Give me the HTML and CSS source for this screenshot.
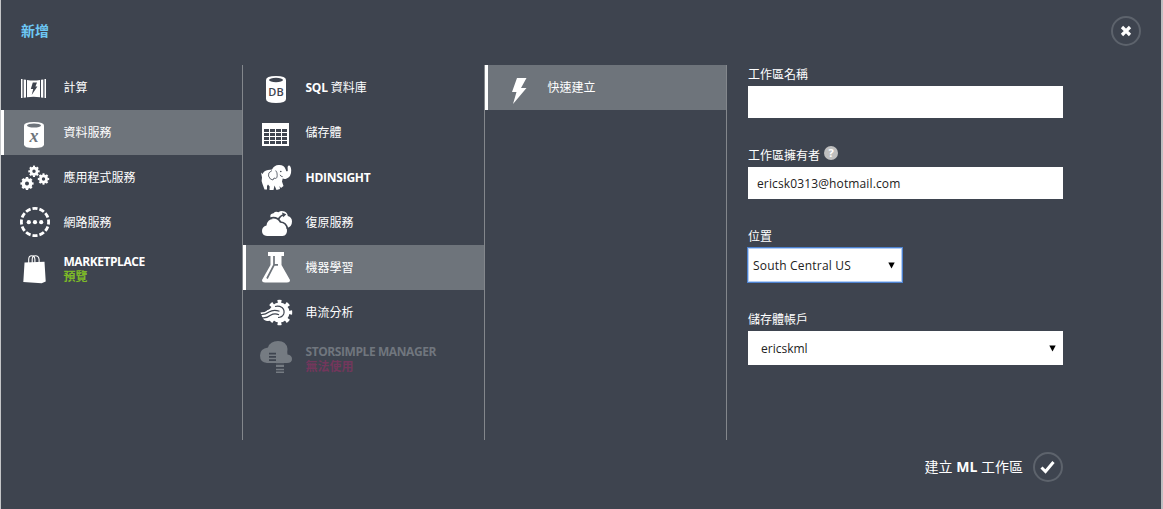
FILE: index.html
```html
<!DOCTYPE html>
<html lang="zh-Hant">
<head>
<meta charset="utf-8">
<title>新增</title>
<link rel="stylesheet" href="styles.css">
</head>
<body>
<div class="drawer">
  <header class="head">
    <h1 class="title">新增</h1>
    <button class="round" aria-label="關閉"><svg width="30" height="30" viewBox="0 0 30 30"><circle class="ring" cx="15" cy="15" r="14"/><path class="cross" d="M11 11l8 8M19 11l-8 8"/></svg></button>
  </header>
  <main class="body">
    <nav class="col">
      <div class="item">
        <svg class="icon" viewBox="0 0 36 45"><path d="M4 14h1.500v19H4zM6.700 14.500l2.300.3v17.600l-2.300.3zM27.500 14H29v19h-1.500zM24 14.800l2.300-.3v18.200l-2.300-.3zM10 15q6.500 1 13 0v17.300q-6.500-1-13 0z"/><path class="cut" d="M15.800 17.500h4.200l-1.600 4h2l-5.700 8.500 1.500-6h-2.400z"/></svg>
        <span class="label">計算</span>
      </div>
      <div class="item on">
        <svg class="icon" viewBox="0 0 36 45"><path d="M7 15.500q0-3.500 10-3.500t10 3.500v19q0 3.500-10 3.500t-10-3.500z"/><ellipse class="cut" cx="17" cy="15.500" rx="7" ry="2"/><text class="script" x="17" y="32">x</text></svg>
        <span class="label">資料服務</span>
      </div>
      <div class="item">
        <svg class="icon" viewBox="0 0 36 45"><g class="gear"><circle cx="17" cy="16.300" r="3.100"/><circle class="teeth" cx="17" cy="16.300" r="4.800" pathLength="16"/><circle cx="26.500" cy="24" r="3.100"/><circle class="teeth" cx="26.500" cy="24" r="4.800" pathLength="16"/><circle class="big" cx="10" cy="28.500" r="3.700"/><circle class="teeth" cx="10" cy="28.500" r="5.700" pathLength="16"/></g></svg>
        <span class="label">應用程式服務</span>
      </div>
      <div class="item">
        <svg class="icon" viewBox="0 0 36 45"><circle class="dashes" cx="18" cy="22" r="13.600" pathLength="96"/><circle cx="11.800" cy="22.200" r="2.100"/><circle cx="18" cy="22.200" r="2.100"/><circle cx="24.200" cy="22.200" r="2.100"/></svg>
        <span class="label">網路服務</span>
      </div>
      <div class="item">
        <svg class="icon" viewBox="0 0 36 45"><path d="M7.500 17.500l20-.8 1.200 19.700-4 1.900L6.300 37z"/><path class="line" d="M11.700 18v-3.500q0-3.700 3-3.700t3.200 3.700V18M15.200 18v-3.500q0-3.700 3.200-3.700t3.700 3.700V18"/></svg>
        <span class="label two"><b class="market">MARKETPLACE</b><small class="sub preview">預覽</small></span>
      </div>
    </nav>
    <nav class="col">
      <div class="item">
        <svg class="icon" viewBox="0 0 36 45"><path d="M7 15q0-4 10-4t10 4v19q0 4-10 4t-10-4z"/><ellipse class="cut" cx="17" cy="15" rx="7" ry="2.200"/><text class="db" x="17" y="31">DB</text></svg>
        <span class="label"><b>SQL</b> 資料庫</span>
      </div>
      <div class="item">
        <svg class="icon" viewBox="0 0 36 45"><path fill-rule="evenodd" d="M3 13h27v23H3zM5 19h5v3H5zm6 0h5v3h-5zm6 0h5v3h-5zm6 0h5v3h-5zM5 23h5v3H5zm6 0h5v3h-5zm6 0h5v3h-5zm6 0h5v3h-5zM5 27h5v3H5zm6 0h5v3h-5zm6 0h5v3h-5zm6 0h5v3h-5zM5 31h5v3H5zm6 0h5v3h-5zm6 0h5v3h-5zm6 0h5v3h-5z"/></svg>
        <span class="label">儲存體</span>
      </div>
      <div class="item">
        <svg class="icon" viewBox="0 0 36 45"><path d="M2 17.500l1.500 1.500Q5 15.500 9 15l4-.5Q15.500 9.500 20.500 10q4.500.2 6 4 .8 2.500 1.500 2.500 1.200-.3.700-2.500-.5-3.500 1.300-3.500t2.200 4.500q.3 7-5 8.700-2 .5-3.500-.2l-.7 3 1.500 4.500-2.500 2-1.500-2 .5 3-3.500 1-2-4.500-1 4.500h-4l.2-3.500-1.700-2-1 1.500v3.500H5.500l-2-5.500q-1.500-3-.5-6.500z"/><path class="cutline thin" d="M13 15.500q-4.500 2-3.500 5.500 1.500 4 4.500 4l1-2q3 1.500 3.200-2.300.3-3.200-1.500-5.200M23.700 21.700q-2.200-.2-2.700-1.900"/><circle class="cut" cx="21.800" cy="16.500" r=".8"/></svg>
        <span class="label"><b>HDINSIGHT</b></span>
      </div>
      <div class="item">
        <svg class="icon" viewBox="0 0 36 45"><path d="M11.500 17.500q-1-3.800 3-4.200 2-2.300 5-1 2.500-2.300 6-.8 3 1 3.300 4.500 4.200 1 4.200 5.500 0 5.500-5.500 6.500z"/><path d="M8 36q-5-.5-5-5t4.500-5.500q1-6.500 6.500-6.500t6.500 4q6.500-.5 7.500 6 .5 6.500-4.500 7z"/><path class="cutline thick" d="M11.500 18q7-1.500 10 4 6 .5 7 7M19.500 19q2-3.500 5-4"/><path class="cut" d="M23 12.500l4.300 1.800-3 3z"/></svg>
        <span class="label">復原服務</span>
      </div>
      <div class="item on">
        <svg class="icon" viewBox="0 0 36 45"><path d="M9 7h16v4h-2.500v9L31 35q0 2.500-3 2.500H6Q3 37.500 3 35l8.500-15v-9H9z"/><path class="cutline thick" d="M15 11v9L8 33.500M15 19.800h4"/></svg>
        <span class="label">機器學習</span>
      </div>
      <div class="item">
        <svg class="icon" viewBox="0 0 36 45"><circle cx="20.500" cy="22.500" r="10"/><circle class="bigteeth" cx="20.500" cy="22.500" r="11" pathLength="16"/><path class="cut" d="M0 9h8.500l2.500 9-5 4H0zM0 30h9l5 6H0z"/><path d="M1.500 22.500q4.500 0 7.500-2.500t7-2.500l5 1.500v8l-5 1.200q-4 3.500-8 2.800-3.500-.5-5-4.500z"/><path class="cutline" d="M1.500 24.500q5 .3 8.500-2.500 4.500-3 10.500-.7M3 27.800q5 .5 8.500-2.500 4-2.500 8.500-.5M16 16.500q4-1 7 1 3 2.700 1.700 6.500-1.700 3.500-5.700 3.500"/></svg>
        <span class="label">串流分析</span>
      </div>
      <div class="item off">
        <svg class="icon" viewBox="0 0 36 45"><path d="M8 28q-7-.5-7-7.500t8-8Q11 6 19 6q8.500 0 9.500 8-.5 3.500 0 5.500 4.500.5 4.500 4.500t-5 4h-3v10h-8V28z"/><path class="cut" d="M10 17.700h7v1.800h-7zM10 21h7v1.800h-7zM10 24.300h7V26h-7zM16 28.300h9v1.500h-9zM16 32h9v1.800h-9zM16 35.200h9v1.300h-9z"/></svg>
        <span class="label two"><b class="store">STORSIMPLE MANAGER</b><small class="sub unavailable">無法使用</small></span>
      </div>
    </nav>
    <nav class="col">
      <div class="item on">
        <svg class="icon" viewBox="0 0 36 45"><path d="M16 13h9.500L20 23h5.500L12 39l3.500-12h-4.500z"/></svg>
        <span class="label">快速建立</span>
      </div>
    </nav>
    <form class="form">
      <div class="field"><label class="caption">工作區名稱</label><div class="box"></div></div>
      <div class="field"><label class="caption">工作區擁有者<svg class="help" width="14" height="14" viewBox="0 0 14 14"><circle cx="7" cy="7" r="7"/><text x="7" y="11.200">?</text></svg></label><div class="box"><span class="mail">ericsk0313@hotmail.com</span></div></div>
      <div class="field"><label class="caption">位置</label><div class="box select focus"><span class="place">South Central US</span><svg width="7" height="7" viewBox="0 0 7 7"><path d="M.3 .5h6.400l-3.200 6z"/></svg></div></div>
      <div class="field"><label class="caption">儲存體帳戶</label><div class="box select wide"><span class="account">ericskml</span><svg width="7" height="7" viewBox="0 0 7 7"><path d="M.3 .5h6.400l-3.200 6z"/></svg></div></div>
    </form>
  </main>
  <footer class="foot">
    <span class="create">建立 <b>ML</b> 工作區</span>
    <button class="round" aria-label="建立"><svg width="30" height="30" viewBox="0 0 30 30"><circle class="ring" cx="15" cy="15" r="14"/><path class="check" d="M8.500 15.500l4 4L20.500 10"/></svg></button>
  </footer>
</div>
</body>
</html>
```
FILE: styles.css
```css
* { box-sizing: border-box; }
body {
  margin: 0;
  background: #3e444f;
  color: #fff;
  font: 12px/15px "Open Sans", "Noto Sans CJK TC", sans-serif;
}
.drawer {
  height: 509px;
  border-left: 1px solid #c4c6c8;
  border-right: 2px solid #bfc0c2;
  overflow: hidden;
}
.head {
  display: flex;
  justify-content: space-between;
  height: 65px;
  padding: 16px 20px 0;
}
.title {
  margin: 5px 0 0;
  color: #6dc8f5;
  font-size: 14px;
  line-height: 20px;
  font-weight: 700;
}
.round {
  width: 30px;
  height: 30px;
  padding: 0;
  border: 0;
  background: none;
}
.round svg { display: block; }
.ring { fill: none; stroke: #5d636c; stroke-width: 2; }
.cross { fill: none; stroke: #fff; stroke-width: 3.2; }
.check { fill: none; stroke: #fff; stroke-width: 3; }

.body { display: flex; height: 375px; }
.col {
  --bg: #3e444f;
  width: 242px;
  border-right: 1px solid #83878c;
}
.item {
  display: flex;
  align-items: center;
  height: 45px;
  padding-left: 16px;
}
.item.on {
  --bg: #6e747b;
  background: #6e747b;
  border-left: 3px solid #fff;
  padding-left: 13px;
}
.icon { flex: none; width: 36px; height: 45px; fill: #fff; }
.label {
  padding-left: 10.5px;
  white-space: nowrap;
}
.label b { letter-spacing: -.25px; }
.label .market { letter-spacing: -.44px; }
.label .store { letter-spacing: -.42px; }
.two { padding-top: 3px; }
.sub { display: block; font-size: 12px; font-weight: 700; }
.preview { color: #7db928; }
.unavailable { color: #72375c; }
.off .label { color: #70767e; }
.off .icon { fill: #757b82; }

.cut { fill: var(--bg); }
.cutline { fill: none; stroke: var(--bg); stroke-width: 1.2; }
.thin { stroke-width: .8; }
.thick { stroke-width: 1.7; }
.line { fill: none; stroke: #fff; stroke-width: 1.1; }
.gear circle { fill: none; stroke: #fff; stroke-width: 2.8; }
.gear .big { stroke-width: 3.4; }
.gear .teeth { stroke-width: 1.8; stroke-dasharray: 1.1 .9; stroke-dashoffset: .55; }
.dashes { fill: none; stroke: #fff; stroke-width: 2.8; stroke-dasharray: 5.8 2.2; stroke-dashoffset: 2.9; }
.bigteeth { fill: none; stroke: #fff; stroke-width: 3.4; stroke-dasharray: .9 1.1; stroke-dashoffset: .45; }
.script { font: italic 700 18px "Liberation Serif", serif; text-anchor: middle; fill: var(--bg); }
.db { font: 600 11px "Open Sans", sans-serif; text-anchor: middle; fill: var(--bg); }

.form { width: 315px; margin-left: 21px; }
.field { height: 81px; }
.field:nth-child(3) { height: 83px; }
.caption {
  display: flex;
  align-items: center;
  height: 21px;
  padding-bottom: 3px;
}
.help { margin: -4px 0 0 4px; fill: #bfbfbf; }
.help text { fill: #fff; font: 700 11px "Open Sans", sans-serif; text-anchor: middle; }
.box {
  display: flex;
  align-items: center;
  height: 32px;
  padding: 0 9px;
  background: #fff;
  color: #222;
}
.mail { letter-spacing: .13px; }
.place { letter-spacing: .2px; }
.select { justify-content: space-between; height: 34px; padding-right: 7px; }
.focus {
  width: 154px;
  padding-left: 5px;
  outline: 1px solid #4d82d0;
  box-shadow: inset 0 0 0 1px #b4cff5;
}
.wide { padding-left: 13px; }
.select svg { fill: #000; }

.foot {
  display: flex;
  align-items: center;
  justify-content: flex-end;
  padding: 12px 98px 0 0;
  font-size: 14px;
  line-height: 20px;
}
.foot .round { margin-left: 10px; }
```
